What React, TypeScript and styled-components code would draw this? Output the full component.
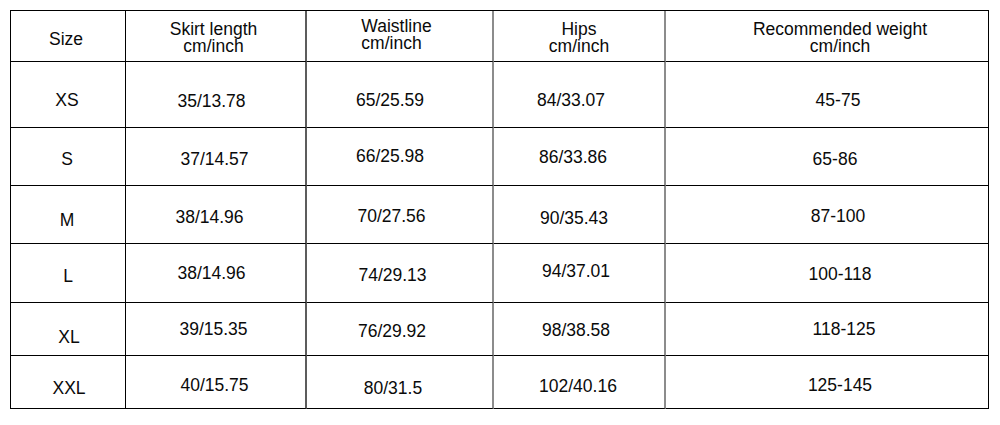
import React from "react";
import styled, {createGlobalStyle} from "styled-components";

const GlobalStyle = createGlobalStyle`
  html, body {
    margin: 0;
    background: #fff;
  }
  body {
    font-family: "Liberation Sans", Arial, sans-serif;
    color: #0a0a0a;
  }
`

const Page = styled.div`
  padding: 10px 0 0 10px;
`

const Table = styled.div`
  display: grid;
  grid-template-columns: 115px 181px 187px 172px 323px;
  grid-template-rows: 51px 66px 58px 58px 59px 53px 53px;
  width: max-content;
  border-left: 1px solid #000;
  border-top: 1px solid #000;
`

type Line = 'black' | 'dark' | 'gray'
const lineStyle: Record<Line, string> = {
    black: '1px solid #000',
    dark: '2px solid #5c5c5c',
    gray: '2px solid #8c8c8c',
}
// one border style per column, left to right
const columnLines: Line[] = ['black', 'dark', 'gray', 'gray', 'black']

const Cell = styled.div<{ $dx: number; $dy: number; $line: Line; $left?: boolean }>`
  box-sizing: border-box;
  display: flex;
  align-items: center;
  justify-content: center;
  border-bottom: 1px solid #000;
  border-right: ${p => lineStyle[p.$line]};
  padding: ${p => `${Math.max(0, p.$dy * 2)}px ${Math.max(0, -p.$dx * 2)}px ${Math.max(0, -p.$dy * 2)}px ${Math.max(0, p.$dx * 2)}px`};
  font-size: 17.5px;
  text-align: ${p => (p.$left ? 'left' : 'center')};
  white-space: nowrap;
`

const HeadText = styled.div`
  line-height: 17px;
`

const BodyText = styled.span`
  line-height: normal;
`

type Head = { lines: string[]; dx: number; dy: number; left?: boolean }
const header: Head[] = [
    {lines: ['Size'], dx: -2, dy: 3},
    {lines: ['Skirt length', 'cm/inch'], dx: -2, dy: 1.5},
    {lines: ['Waistline', 'cm/inch'], dx: -3, dy: -1, left: true},
    {lines: ['Hips', 'cm/inch'], dx: 0, dy: 2},
    {lines: ['Recommended weight', 'cm/inch'], dx: 13, dy: 2},
]

// each value carries its own nudge [dx, dy] so the text sits where the chart has it
type Entry = [string, number, number]
const rows: Entry[][] = [
    [['XS', -1, 5.5], ['35/13.78', -4, 6.5], ['65/25.59', -9.5, 5.5], ['84/33.07', -8, 5.5], ['45-75', 11, 5.5]],
    [['S', -1, 2.5], ['37/14.57', -1, 2.5], ['66/25.98', -9.5, -0.5], ['86/33.86', -6, 0.5], ['65-86', 8, 2.5]],
    [['M', -1, 5.5], ['38/14.96', -6, 2.5], ['70/27.56', -8, 1.5], ['90/35.43', -5, 3.5], ['87-100', 11, 1.5]],
    [['L', 0, 3], ['38/14.96', -4, 0], ['74/29.13', -7, 2], ['94/37.01', -3, -2], ['100-118', 13, 1]],
    [['XL', 1, 8], ['39/15.35', -2, 0], ['76/29.92', -7.5, 2], ['98/38.58', -3, 1], ['118-125', 17, 0]],
    [['XXL', 1, 6], ['40/15.75', -1, 3], ['80/31.5', -6.5, 6], ['102/40.16', -1, 4], ['125-145', 13, 3]],
]

const SizeChart: React.FC = () => {
    return (
        <Table>
            {header.map((h, i) => (
                <Cell key={'h' + i} $dx={h.dx} $dy={h.dy} $line={columnLines[i]} $left={h.left}>
                    <HeadText>
                        {h.lines.map(l => <div key={l}>{l}</div>)}
                    </HeadText>
                </Cell>
            ))}
            {rows.map((row, r) => row.map(([text, dx, dy], c) => (
                <Cell key={r + '-' + c} $dx={dx} $dy={dy} $line={columnLines[c]}>
                    <BodyText>{text}</BodyText>
                </Cell>
            )))}
        </Table>
    )
}

export default function App() {
    return (
        <Page>
            <GlobalStyle/>
            <SizeChart/>
        </Page>
    )
}
